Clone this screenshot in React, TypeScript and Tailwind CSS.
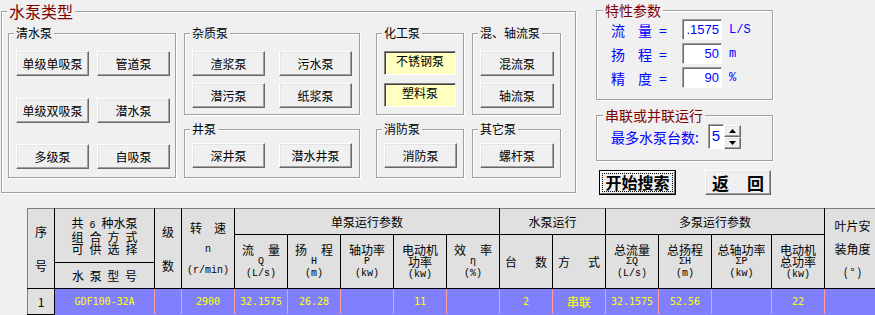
import { FC, ReactNode } from 'react';

// 经典 Windows 风格的控件样式
const raised =
  "flex items-center justify-center bg-[#f0f0f0] border border-t-white border-l-white border-r-[#696969] border-b-[#696969] shadow-[inset_-1px_-1px_0_#a0a0a0,inset_1px_1px_0_#e3e3e3] text-[12px] leading-[14px] text-black";
const sunkenYellow =
  "flex items-start justify-center pt-[2px] w-[72px] h-[24px] bg-[#ffffc0] border border-t-[#808080] border-l-[#808080] border-r-white border-b-white shadow-[inset_1px_1px_0_#404040] text-[12px] leading-[14px] text-black";
const sunkenInput =
  "bg-white border border-t-[#a0a0a0] border-l-[#a0a0a0] border-r-white border-b-white shadow-[inset_1px_1px_0_#696969]";

const Btn: FC<{ label: string; w?: string }> = ({ label, w = "w-[73px]" }) => (
  <div className={`${raised} ${w} h-[25px]`}>{label}</div>
);

const Group: FC<{ title: string; className: string; children?: ReactNode }> = ({ title, className, children }) => (
  <fieldset className={`border border-[#a0a0a0] shadow-[inset_1px_1px_0_#ffffff,1px_1px_0_#ffffff] ${className}`}>
    <legend className="ml-[5px] px-[2px] text-[12px] leading-[14px] text-black bg-[#f0f0f0]">{title}</legend>
    {children}
  </fieldset>
);

const ParamRow: FC<{ a: string; b: string; value: string; unit: string }> = ({ a, b, value, unit }) => (
  <div className="flex items-center h-[21px] text-[14px] leading-[16px] text-[#0000ff]">
    <span className="w-[27px]">{a}</span>
    <span className="w-[21px]">{b}</span>
    <span className="w-[23px]">=</span>
    <div className={`${sunkenInput} w-[40px] h-[21px] flex items-center justify-end pr-[2px] font-['Liberation_Sans',sans-serif] text-[13px]`}>
      {value}
    </div>
    <span className="ml-[7px] font-['Liberation_Mono',monospace] text-[12px]">{unit}</span>
  </div>
);

const th = "border border-black bg-[#e0e0e0] p-0 font-normal text-black text-[12px] leading-[12px] align-middle";
const latin = "font-['Liberation_Mono',monospace] text-[10px] leading-[11px]";
const td = "border-y border-y-[#8080ff] border-x border-x-[#ffa0a0] bg-[#8080ff] p-0 text-center text-[#ffff00] font-['DejaVu_Sans_Mono',monospace] text-[10px]";

// 三行表头: 中文 / 符号 / 单位
const Head3: FC<{ top: ReactNode; mid: ReactNode; unit: string; midLatin?: boolean }> = ({ top, mid, unit, midLatin = true }) => (
  <div className="flex flex-col items-center">
    <div className="leading-[12px]">{top}</div>
    <div className={midLatin ? latin : "leading-[12px]"}>{mid}</div>
    <div className={`${latin} mt-[1px]`}>{unit}</div>
  </div>
);

const Spread: FC<{ items: string[]; w: string }> = ({ items, w }) => (
  <div className={`flex justify-between ${w}`}>
    {items.map((s, i) => (
      <span key={i}>{s}</span>
    ))}
  </div>
);

export default function App() {
  return (
    <div className="w-[875px] h-[315px] overflow-hidden bg-[#f0f0f0] font-['Noto_Sans_CJK_SC',sans-serif] text-black">
      <div className="flex h-[200px] pt-[2px]">
        {/* 水泵类型 */}
        <fieldset className="ml-[1px] w-[575px] h-[191px] border border-[#a0a0a0] shadow-[inset_1px_1px_0_#ffffff,1px_1px_0_#ffffff]">
          <legend className="ml-[5px] px-[2px] text-[16px] leading-[18px] text-[#800000] bg-[#f0f0f0]">水泵类型</legend>
          <div className="flex pl-[6px] pt-[6px]">
            <Group title="清水泵" className="w-[168px] h-[152px]">
              <div className="pl-[7px] pt-[11px]">
                <div className="flex gap-x-[8px]">
                  <Btn label="单级单吸泵" />
                  <Btn label="管道泵" />
                </div>
                <div className="flex gap-x-[8px] mt-[22px]">
                  <Btn label="单级双吸泵" />
                  <Btn label="潜水泵" />
                </div>
                <div className="flex gap-x-[8px] mt-[21px]">
                  <Btn label="多级泵" />
                  <Btn label="自吸泵" />
                </div>
              </div>
            </Group>

            <div className="ml-[8px] flex flex-col">
              <Group title="杂质泵" className="w-[176px] h-[89px]">
                <div className="grid grid-cols-[73px_73px] gap-x-[14px] gap-y-[7px] pl-[7px] pt-[11px]">
                  <Btn label="渣浆泵" />
                  <Btn label="污水泵" />
                  <Btn label="潜污泵" />
                  <Btn label="纸浆泵" />
                </div>
              </Group>
              <Group title="井泵" className="w-[176px] h-[56px] mt-[7px]">
                <div className="flex gap-x-[14px] pl-[7px] pt-[7px]">
                  <Btn label="深井泵" />
                  <Btn label="潜水井泵" />
                </div>
              </Group>
            </div>

            <div className="ml-[16px] flex flex-col">
              <Group title="化工泵" className="w-[88px] h-[89px]">
                <div className="flex flex-col gap-y-[8px] pl-[7px] pt-[11px]">
                  <div className={sunkenYellow}>不锈钢泵</div>
                  <div className={sunkenYellow}>塑料泵</div>
                </div>
              </Group>
              <Group title="消防泵" className="w-[88px] h-[56px] mt-[7px]">
                <div className="pl-[7px] pt-[7px]">
                  <Btn label="消防泵" />
                </div>
              </Group>
            </div>

            <div className="ml-[8px] flex flex-col">
              <Group title="混、轴流泵" className="w-[89px] h-[89px]">
                <div className="flex flex-col gap-y-[7px] pl-[7px] pt-[11px]">
                  <Btn label="混流泵" w="w-[74px]" />
                  <Btn label="轴流泵" w="w-[74px]" />
                </div>
              </Group>
              <Group title="其它泵" className="w-[89px] h-[56px] mt-[7px]">
                <div className="pl-[7px] pt-[7px]">
                  <Btn label="螺杆泵" w="w-[74px]" />
                </div>
              </Group>
            </div>
          </div>
        </fieldset>

        {/* 右侧参数 */}
        <div className="ml-[20px] w-[177px] flex flex-col">
          <fieldset className="h-[98px] border border-[#a0a0a0] shadow-[inset_1px_1px_0_#ffffff,1px_1px_0_#ffffff]">
            <legend className="ml-[6px] px-[2px] text-[14px] leading-[16px] text-[#800000] bg-[#f0f0f0]">特性参数</legend>
            <div className="flex flex-col gap-y-[3px] pl-[14px] pt-[1px]">
              <ParamRow a="流" b="量" value=".1575" unit="L/S" />
              <ParamRow a="扬" b="程" value="50" unit="m" />
              <ParamRow a="精" b="度" value="90" unit="%" />
            </div>
          </fieldset>

          <fieldset className="mt-[7px] h-[54px] border border-[#a0a0a0] shadow-[inset_1px_1px_0_#ffffff,1px_1px_0_#ffffff]">
            <legend className="ml-[6px] px-[2px] text-[14px] leading-[16px] text-[#800000] bg-[#f0f0f0]">串联或并联运行</legend>
            <div className="flex items-center pl-[14px] pt-[1px]">
              <span className="w-[97px] text-[14px] leading-[16px] text-[#0000ff]">最多水泵台数:</span>
              <div className={`${sunkenInput} w-[16px] h-[25px] flex items-center justify-center font-['Liberation_Sans',sans-serif] text-[15px] text-[#0000ff]`}>
                5
              </div>
              <div className="flex flex-col">
                <div className={`${raised} w-[17px] h-[12px]`}>
                  <svg width="7" height="4" viewBox="0 0 7 4">
                    <path d="M3.5 0L7 4H0z" fill="#000" />
                  </svg>
                </div>
                <div className={`${raised} w-[17px] h-[12px]`}>
                  <svg width="7" height="4" viewBox="0 0 7 4">
                    <path d="M0 0h7L3.5 4z" fill="#000" />
                  </svg>
                </div>
              </div>
            </div>
          </fieldset>

          <div className="flex mt-[9px]">
            <div className="ml-[3px] w-[77px] h-[25px] border border-black">
              <div className="h-full border border-t-white border-l-white border-r-[#696969] border-b-[#696969] bg-[#f0f0f0] p-[1px]">
                <div className="h-full border border-dotted border-black flex items-center justify-center whitespace-nowrap text-[16px] leading-[17px] font-bold">
                  开始搜索
                </div>
              </div>
            </div>
            <div className={`${raised} ml-[29px] w-[66px] h-[25px] !text-[17px] font-bold`}>
              返<span className="w-[18px]" />回
            </div>
          </div>
        </div>
      </div>

      {/* 结果表格 */}
      <div className="pl-[27px] pt-[8px]">
        <table className="table-fixed border-collapse w-[853px]">
          <colgroup>
            <col className="w-[27px]" />
            <col className="w-[100px]" />
            <col className="w-[27px]" />
            <col className="w-[53px]" />
            <col className="w-[53px]" />
            <col className="w-[53px]" />
            <col className="w-[53px]" />
            <col className="w-[53px]" />
            <col className="w-[53px]" />
            <col className="w-[53px]" />
            <col className="w-[53px]" />
            <col className="w-[53px]" />
            <col className="w-[53px]" />
            <col className="w-[60px]" />
            <col className="w-[53px]" />
            <col className="w-[56px]" />
          </colgroup>
          <thead>
            <tr className="h-[26px]">
              <th rowSpan={3} className={`${th} border-l-[#808080] border-t-[#808080]`}>
                <div className="flex flex-col items-center gap-y-[22px]">
                  <span>序</span>
                  <span>号</span>
                </div>
              </th>
              <th rowSpan={2} className={`${th} border-t-[#808080]`}>
                <div className="flex flex-col items-center leading-[12px]">
                  <div className="flex justify-between w-[66px] items-baseline">
                    <span>共</span>
                    <span className={latin}>6</span>
                    <span>种水泵</span>
                  </div>
                  <Spread items={["组", "合", "方", "式"]} w="w-[66px]" />
                  <Spread items={["可", "供", "选", "择"]} w="w-[66px]" />
                </div>
              </th>
              <th rowSpan={3} className={`${th} border-t-[#808080]`}>
                <div className="flex flex-col items-center gap-y-[22px]">
                  <span>级</span>
                  <span>数</span>
                </div>
              </th>
              <th rowSpan={3} className={`${th} border-t-[#808080]`}>
                <div className="flex flex-col items-center gap-y-[10px]">
                  <Spread items={["转", "速"]} w="w-[36px]" />
                  <span className={latin}>n</span>
                  <span className={latin}>(r/min)</span>
                </div>
              </th>
              <th colSpan={5} className={`${th} border-t-[#808080]`}>单泵运行参数</th>
              <th colSpan={2} className={`${th} border-t-[#808080]`}>水泵运行</th>
              <th colSpan={4} className={`${th} border-t-[#808080]`}>多泵运行参数</th>
              <th rowSpan={3} className={`${th} border-t-[#808080]`}>
                <div className="flex flex-col items-center gap-y-[11px]">
                  <span>叶片安</span>
                  <span>装角度</span>
                  <span>(&nbsp;°&nbsp;)</span>
                </div>
              </th>
            </tr>
            <tr className="h-[28px]">
              <th rowSpan={2} className={th}>
                <Head3 top={<Spread items={["流", "量"]} w="w-[38px]" />} mid="Q" unit="(L/s)" />
              </th>
              <th rowSpan={2} className={th}>
                <Head3 top={<Spread items={["扬", "程"]} w="w-[38px]" />} mid="H" unit="(m)" />
              </th>
              <th rowSpan={2} className={th}>
                <Head3 top="轴功率" mid="P" unit="(kw)" />
              </th>
              <th rowSpan={2} className={th}>
                <Head3 top="电动机" mid="功率" unit="(kw)" midLatin={false} />
              </th>
              <th rowSpan={2} className={th}>
                <Head3 top={<Spread items={["效", "率"]} w="w-[38px]" />} mid="η" unit="(%)" />
              </th>
              <th rowSpan={2} className={th}>
                <div className="flex justify-center">
                  <Spread items={["台", "数"]} w="w-[42px]" />
                </div>
              </th>
              <th rowSpan={2} className={th}>
                <div className="flex justify-center">
                  <Spread items={["方", "式"]} w="w-[42px]" />
                </div>
              </th>
              <th rowSpan={2} className={th}>
                <Head3 top="总流量" mid="ΣQ" unit="(L/s)" />
              </th>
              <th rowSpan={2} className={th}>
                <Head3 top="总扬程" mid="ΣH" unit="(m)" />
              </th>
              <th rowSpan={2} className={th}>
                <Head3 top="总轴功率" mid="ΣP" unit="(kw)" />
              </th>
              <th rowSpan={2} className={th}>
                <Head3 top="电动机" mid="总功率" unit="(kw)" midLatin={false} />
              </th>
            </tr>
            <tr className="h-[26px]">
              <th className={th}>
                <div className="flex justify-center">
                  <Spread items={["水", "泵", "型", "号"]} w="w-[65px]" />
                </div>
              </th>
            </tr>
          </thead>
          <tbody>
            <tr className="h-[26px]">
              <td className="border border-black border-l-[#808080] bg-[#e0e0e0] p-0 text-center text-[12px]">1</td>
              <td className={td}>GDF100-32A</td>
              <td className={td}></td>
              <td className={td}>2900</td>
              <td className={td}>32.1575</td>
              <td className={td}>26.28</td>
              <td className={td}></td>
              <td className={td}>11</td>
              <td className={td}></td>
              <td className={td}>2</td>
              <td className={`${td} font-['Noto_Sans_CJK_SC',sans-serif] text-[12px]`}>串联</td>
              <td className={td}>32.1575</td>
              <td className={td}>52.56</td>
              <td className={td}></td>
              <td className={td}>22</td>
              <td className={td}></td>
            </tr>
          </tbody>
        </table>
      </div>
    </div>
  );
}
